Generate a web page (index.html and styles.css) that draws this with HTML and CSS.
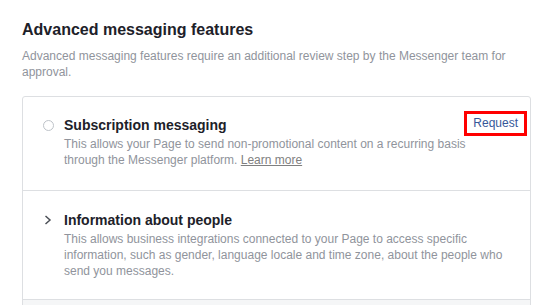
FILE: index.html
```html
<!DOCTYPE html>
<html>
<head>
<meta charset="utf-8">
<link rel="stylesheet" href="styles.css">
</head>
<body>
<div class="page">
  <h2 class="heading">Advanced messaging features</h2>
  <p class="intro">Advanced messaging features require an additional review step by the Messenger team for approval.</p>
  <div class="card">
    <div class="row row-first">
      <span class="icon"><span class="radio"></span></span>
      <div class="body">
        <div class="head">
          <div class="title">Subscription messaging</div>
          <a class="request" href="#">Request</a>
        </div>
        <div class="desc">This allows your Page to send non-promotional content on a recurring basis through the Messenger platform. <a class="learn" href="#">Learn more</a></div>
      </div>
    </div>
    <div class="row row-second">
      <span class="icon">
        <svg width="8" height="10" viewBox="0 0 8 10"><path d="M1.5 1 L6 5 L1.5 9" fill="none" stroke="#4b4f56" stroke-width="1.5"/></svg>
      </span>
      <div class="body">
        <div class="head">
          <div class="title">Information about people</div>
        </div>
        <div class="desc">This allows business integrations connected to your Page to access specific information, such as gender, language locale and time zone, about the people who send you messages.</div>
      </div>
    </div>
    <div class="row-more"></div>
  </div>
</div>
</body>
</html>
```
FILE: styles.css
```css
html, body {
  margin: 0;
  padding: 0;
  background: #ffffff;
}
body {
  font-family: "Liberation Sans", Arial, sans-serif;
}
.page {
  padding: 20px 6px 0 22px;
}
.heading {
  margin: 0;
  font-size: 16px;
  line-height: 20px;
  font-weight: bold;
  color: #1d2129;
}
.intro {
  margin: 8px 0 0;
  font-size: 12px;
  line-height: 16px;
  color: #90949c;
}
.card {
  margin-top: 16px;
  border: 1px solid #dddfe2;
  border-radius: 3px;
  background: #fff;
}
.row {
  display: flex;
  align-items: flex-start;
  padding: 19px 16px 22px 19px;
  border-bottom: 1px solid #dddfe2;
}
.row-first {
  padding-right: 3px;
}
.row-second {
  padding-top: 20px;
  padding-bottom: 20px;
}
.icon {
  flex: 0 0 12px;
  height: 18px;
  display: flex;
  align-items: center;
  justify-content: center;
  margin-right: 10px;
}
.radio {
  width: 9px;
  height: 9px;
  border: 1.5px solid #bec3c9;
  border-radius: 50%;
}
.body {
  flex: 1;
}
.head {
  display: flex;
  align-items: flex-start;
  justify-content: space-between;
  height: 18px;
}
.title {
  font-size: 14px;
  line-height: 18px;
  font-weight: bold;
  color: #1d2129;
}
.desc {
  margin-top: 2px;
  max-width: 440px;
  font-size: 12px;
  line-height: 16px;
  color: #90949c;
}
.learn {
  color: #7f7f7f;
  text-decoration: underline;
}
.request {
  margin-top: -5px;
  border: 3px solid #ff0000;
  padding: 1px 6px 2px 6px;
  font-size: 12px;
  line-height: 16px;
  color: #365899;
  text-decoration: none;
  background: #fff;
}
.row-more {
  height: 20px;
  background: #f5f6f7;
}
```
